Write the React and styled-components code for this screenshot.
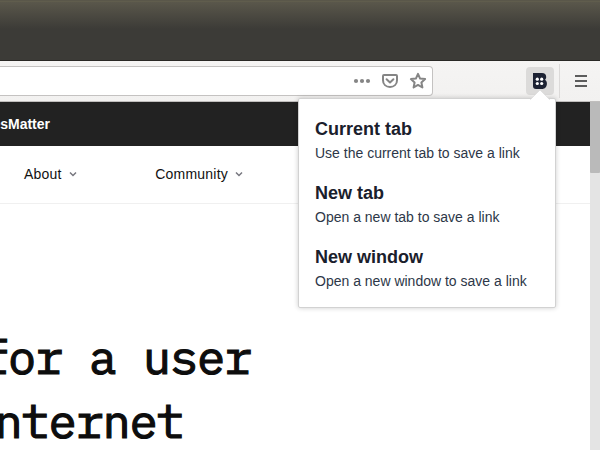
import React from "react";
import styled, { createGlobalStyle } from "styled-components";

const GlobalStyle = createGlobalStyle`
  * { box-sizing: border-box; }
  body { margin: 0; overflow: hidden; background: #fff; }
`;

const Window = styled.div`
  position: relative;
  width: 600px;
  height: 450px;
  overflow: hidden;
  display: flex;
  flex-direction: column;
  background: #fff;
  font-family: "Liberation Sans", Arial, sans-serif;
`;

const TitleBar = styled.header`
  flex: 0 0 61px;
  border-top: 1px solid #5a574a;
  border-bottom: 1px solid #292825;
  background: linear-gradient(#66634f 0, #5a574b 1px, #3c3b37 28px);
`;

const Toolbar = styled.div`
  flex: 0 0 41px;
  display: flex;
  align-items: flex-start;
  padding-top: 5px;
  border-bottom: 1px solid #c0bebd;
  background: linear-gradient(#f5f4f3, #f2f1f0);
`;

const AddressBar = styled.div`
  width: 433px;
  height: 30px;
  display: flex;
  align-items: center;
  justify-content: flex-end;
  gap: 10px;
  padding-right: 5px;
  border: 1px solid #c4c2c1;
  border-left: 0;
  border-radius: 0 4px 4px 0;
  background: #fff;
`;

const Icon = styled.svg`
  display: block;
  flex: none;
  overflow: visible;
`;

const ExtensionButton = styled.div`
  width: 28px;
  height: 28px;
  margin: 1px 0 0 93px;
  display: grid;
  place-items: center;
  border-radius: 4px;
  background: #dcdbda;
`;

const Divider = styled.div`
  width: 1px;
  height: 34px;
  margin: -2px 0 0 5px;
  background: #dcdad9;
`;

const MenuIcon = styled(Icon)`
  margin: 9px 0 0 15px;
`;

const Viewport = styled.div`
  flex: 1;
  min-height: 0;
  display: flex;
`;

const Page = styled.main`
  flex: 1;
  min-width: 0;
  overflow: hidden;
`;

const Banner = styled.div`
  height: 44px;
  line-height: 44px;
  background: #222;
  color: #fff;
  font-size: 14px;
  font-weight: 700;
  white-space: nowrap;
`;

const BannerText = styled.span`
  display: flex;
  justify-content: flex-end;
  width: 50px;
`;

const Nav = styled.nav`
  height: 58px;
  display: flex;
  align-items: center;
  gap: 78.5px;
  padding: 0 0 2px 24px;
  border-bottom: 1px solid #f0f0f0;
`;

const NavItem = styled.div`
  display: flex;
  align-items: center;
  gap: 7px;
  color: #111;
  font-size: 14px;
  letter-spacing: 0.22px;
  line-height: 20px;
`;

const Headline = styled.h1`
  margin: 121px 0 0;
  color: #0d0d0d;
  font: 400 47px/64px "IBM Plex Mono", "Liberation Mono", monospace;
  letter-spacing: -1.2px;
  -webkit-text-stroke: 1.2px #0d0d0d;
  white-space: pre;
`;

const HeadlineLine = styled.span`
  display: block;
  margin-left: ${({ $shift }) => $shift}px;
`;

const ScrollTrack = styled.div`
  width: 10px;
  background: #e4e4e4;
`;

const ScrollThumb = styled.div`
  height: 71px;
  border-radius: 0 0 1px 1px;
  background: #bababa;
`;

const Popup = styled.section`
  position: absolute;
  left: 298px;
  top: 98px;
  width: 258px;
  height: 210px;
  display: flex;
  flex-direction: column;
  gap: 16px;
  padding: 19px 16px 0;
  border: 1px solid #d2d2d2;
  border-radius: 2px;
  background: #fff;
  box-shadow: 0 0 5px rgba(0, 0, 0, 0.2);
`;

const PopupArrow = styled(Icon)`
  position: absolute;
  left: 231px;
  top: -9px;
`;

const Option = styled.div`
  flex: 0 0 48px;
`;

const OptionTitle = styled.h2`
  margin: 0;
  color: #1a202c;
  font-size: 18px;
  font-weight: 700;
  line-height: 22px;
`;

const OptionText = styled.p`
  margin: 3px 0 0;
  color: #2d3748;
  font-size: 14px;
  line-height: 20px;
  white-space: nowrap;
`;

const options = [
  ["Current tab", "Use the current tab to save a link"],
  ["New tab", "Open a new tab to save a link"],
  ["New window", "Open a new window to save a link"],
];

function MoreIcon() {
  return (
    <Icon width="18" height="18" fill="#858585">
      <circle cx="3" cy="9" r="2.100" />
      <circle cx="9" cy="9" r="2.100" />
      <circle cx="15" cy="9" r="2.100" />
    </Icon>
  );
}

function PocketIcon() {
  return (
    <Icon width="18" height="18" fill="none" stroke="#858585" strokeWidth="2" strokeLinecap="round" strokeLinejoin="round">
      <path d="M3 3h12c.7 0 1 .3 1 1v4.2C16 12.3 13 15 9 15S2 12.3 2 8.200V4c0-.7.3-1 1-1Z" />
      <path d="m5.600 7.300 3.400 3.200 3.400-3.200" />
    </Icon>
  );
}

function StarIcon() {
  return (
    <Icon width="18" height="18" fill="none" stroke="#858585" strokeWidth="2" strokeLinejoin="round">
      <path d="m9 1.900 2.100 4.700 5 .5-3.700 3.400 1 5L9 12.900l-4.400 2.600 1-5L1.900 7.100l5-.5Z" />
    </Icon>
  );
}

function Chevron() {
  return (
    <Icon width="8" height="6" fill="none" stroke="#77777f" strokeWidth="1.500">
      <path d="m1 1.500 3 3 3-3" />
    </Icon>
  );
}

export default function App() {
  return (
    <>
      <GlobalStyle />
      <Window>
        <TitleBar />
        <Toolbar>
          <AddressBar>
            <MoreIcon />
            <PocketIcon />
            <StarIcon />
          </AddressBar>
          <ExtensionButton>
            <Icon width="16" height="16">
              <path fill="#1d2233" d="M1 0h9c2.700 0 4.200 1.600 4.200 4 0 1.200-.4 2-1.200 2.700 1.200.8 1.900 2 1.900 3.800 0 3.400-2 5.500-5 5.500H4c-2 0-3-1-3-3Z" />
              <g fill="#fff">
                <circle cx="5.300" cy="6.200" r="1.600" />
                <circle cx="9.700" cy="6.200" r="1.600" />
                <circle cx="5.300" cy="10.500" r="1.600" />
                <circle cx="9.700" cy="10.500" r="1.600" />
              </g>
            </Icon>
          </ExtensionButton>
          <Divider />
          <MenuIcon width="12" height="12" stroke="#5c5c5c" strokeWidth="2">
            <path d="M0 1h12M0 6h12M0 11h12" />
          </MenuIcon>
        </Toolbar>
        <Viewport>
          <Page>
            <Banner>
              <BannerText>esMatter</BannerText>
            </Banner>
            <Nav>
              <NavItem>About <Chevron /></NavItem>
              <NavItem>Community <Chevron /></NavItem>
            </Nav>
            <Headline>
              <HeadlineLine $shift={-19}>for a user</HeadlineLine>
              <HeadlineLine $shift={-32.5}>internet</HeadlineLine>
            </Headline>
          </Page>
          <ScrollTrack>
            <ScrollThumb />
          </ScrollTrack>
        </Viewport>
        <Popup>
          <PopupArrow width="20" height="10">
            <path d="M0 10 10 0l10 10" fill="#fff" stroke="#d2d2d2" strokeWidth=".5" />
          </PopupArrow>
          {options.map(([title, text]) => (
            <Option key={title}>
              <OptionTitle>{title}</OptionTitle>
              <OptionText>{text}</OptionText>
            </Option>
          ))}
        </Popup>
      </Window>
    </>
  );
}
